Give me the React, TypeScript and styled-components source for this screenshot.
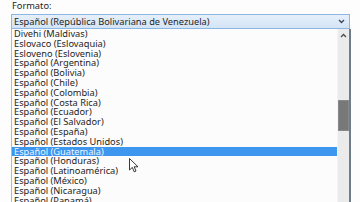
import React from "react";
import styled, { createGlobalStyle } from "styled-components";

const Global = createGlobalStyle`
  html, body { margin: 0; padding: 0; background: #fdfdfd; }
  body { width: 360px; height: 202px; overflow: hidden; }
`;

const Page = styled.div`
  position: relative;
  width: 360px;
  height: 202px;
  overflow: hidden;
  padding: 1px 0 0 11px;
  box-sizing: border-box;
  font-family: "Noto Sans", "Open Sans", sans-serif;
  font-size: 9.25px;
  color: #1e1e1e;
`;

const Label = styled.div`
  height: 13px;
  line-height: 10px;
  padding-left: 1px;
`;

const Combo = styled.div`
  width: 339px;
  height: 15px;
  box-sizing: border-box;
  border: 1px solid #8db6e2;
  background: linear-gradient(#e6f0fb, #d3e4f6);
  display: flex;
  align-items: center;
  justify-content: space-between;
  padding: 0 4px 0 2px;
  line-height: 12px;
`;

const ListBox = styled.div`
  width: 340px;
  height: 180px;
  box-sizing: border-box;
  border-left: 1px solid #b9b9b9;
  border-right: 2px solid #6f7c8c;
  display: grid;
  grid-template-columns: 1fr 12px;
  overflow: hidden;
  background: #fcfcfc;
`;

const Items = styled.div`
  display: flex;
  flex-direction: column;
`;

const Item = styled.div<{ $selected?: boolean }>`
  height: 9.8px;
  line-height: 9.8px;
  padding-left: 2px;
  white-space: nowrap;
  background: ${(p) => (p.$selected ? "#3d97ef" : "transparent")};
  color: ${(p) => (p.$selected ? "#eef6ff" : "#1e1e1e")};
`;

const Scrollbar = styled.div`
  background: #ebebeb;
  border-left: 1px solid #f4f4f4;
  display: flex;
  flex-direction: column;
  align-items: center;
  padding-top: 2px;
`;

const Arrow = styled.div`
  height: 8px;
  display: flex;
  align-items: center;
  justify-content: center;
`;

const Thumb = styled.div`
  margin-top: 61px;
  width: 11px;
  height: 31px;
  background: #787878;
  border: 1px solid #8a8a8a;
  box-sizing: border-box;
`;

const Cursor = styled.svg`
  position: absolute;
  left: 129px;
  top: 158px;
`;

const items = [
  "Divehi (Maldivas)",
  "Eslovaco (Eslovaquia)",
  "Esloveno (Eslovenia)",
  "Español (Argentina)",
  "Español (Bolivia)",
  "Español (Chile)",
  "Español (Colombia)",
  "Español (Costa Rica)",
  "Español (Ecuador)",
  "Español (El Salvador)",
  "Español (España)",
  "Español (Estados Unidos)",
  "Español (Guatemala)",
  "Español (Honduras)",
  "Español (Latinoamérica)",
  "Español (México)",
  "Español (Nicaragua)",
  "Español (Panamá)",
  "Español (Paraguay)",
];

export default function App() {
  return (
    <>
      <Global />
      <Page>
        <Label>Formato:</Label>
        <Combo>
          <span>Español (República Bolivariana de Venezuela)</span>
          <svg width="7" height="5" viewBox="0 0 7 5">
            <path d="M1 1 L3.5 3.5 L6 1" fill="none" stroke="#3a4a5e" strokeWidth="1.4" />
          </svg>
        </Combo>
        <ListBox>
          <Items>
            {items.map((t, i) => (
              <Item key={t} $selected={i === 12}>
                {t}
              </Item>
            ))}
          </Items>
          <Scrollbar>
            <Arrow>
              <svg width="7" height="5" viewBox="0 0 7 5">
                <path d="M1 4 L3.5 1.5 L6 4" fill="none" stroke="#4a4a4a" strokeWidth="1.3" />
              </svg>
            </Arrow>
            <Thumb />
          </Scrollbar>
        </ListBox>
        <Cursor width="11" height="16" viewBox="0 0 11 16">
          <path
            d="M0.5 0.5 L0.5 12 L3.3 9.4 L5.2 13.8 L7 13 L5.2 8.8 L9 8.8 Z"
            fill="#fff"
            stroke="#222"
            strokeWidth="0.9"
            strokeLinejoin="round"
          />
        </Cursor>
      </Page>
    </>
  );
}
